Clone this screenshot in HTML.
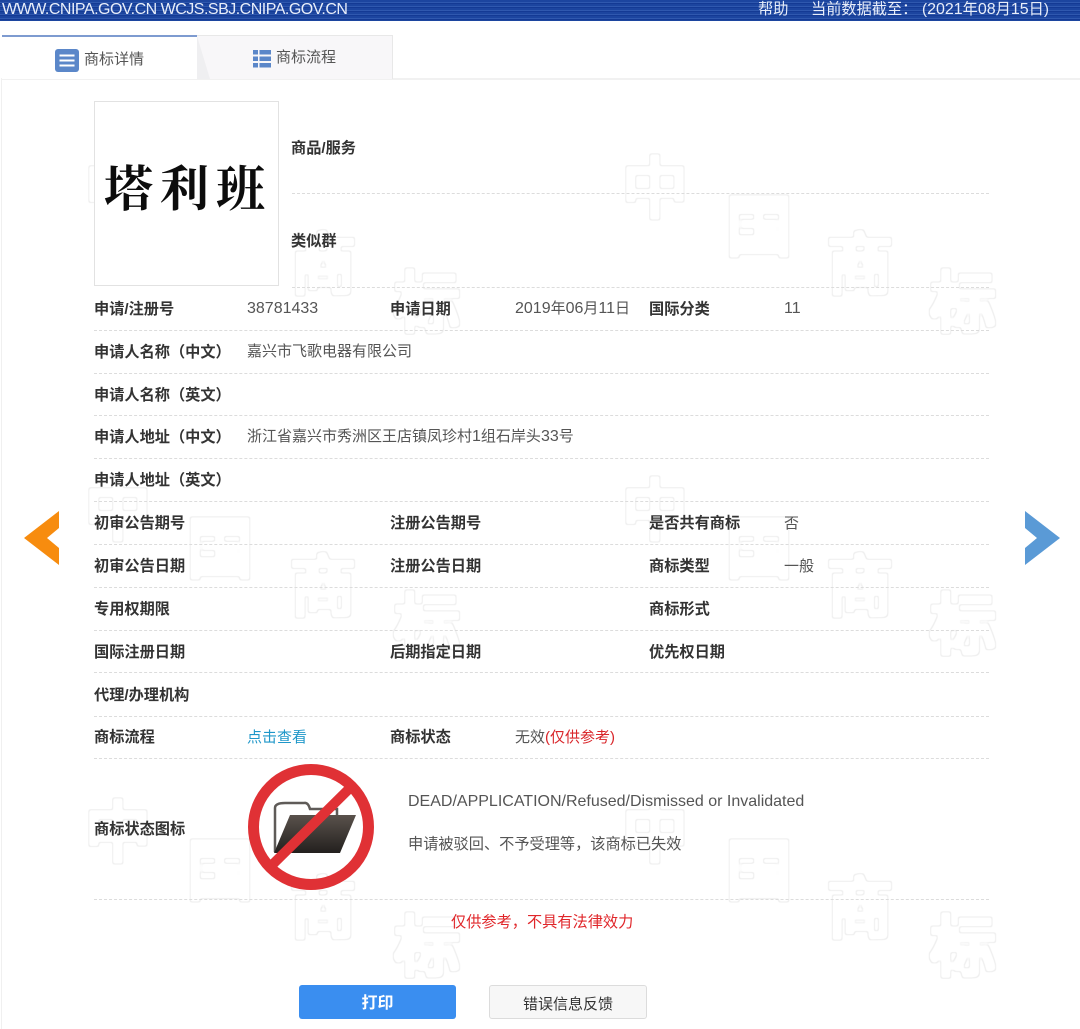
<!DOCTYPE html>
<html lang="zh"><head><meta charset="utf-8"><title>商标详情</title>
<style>
html,body{margin:0;padding:0;background:#fff}
#p{position:relative;width:1080px;height:1029px;overflow:hidden;background:#fff;font-family:"Liberation Sans","Noto Sans CJK SC",sans-serif;font-size:15px;color:#555;filter:blur(.35px)}
#p div{position:absolute;white-space:nowrap}
.l{font-weight:700;color:#333;height:22px;line-height:22px;font-size:15.2px}
.v{color:#555;height:22px;line-height:22px}
.v b{font-weight:400;font-size:16px}
.d{height:0;border-top:1px dashed #dcdcdc;left:94px;width:895px}
#wm{position:absolute;left:0;top:0}
#wm text{font-family:"Noto Sans CJK SC",sans-serif;font-size:66px;font-weight:400;fill:#000;text-anchor:middle}
</style></head><body><div id="p">
<svg id="wm" width="1080" height="1029">
<defs><filter id="o" filterUnits="userSpaceOnUse" x="0" y="0" width="1080" height="1029" color-interpolation-filters="sRGB">
<feMorphology in="SourceAlpha" operator="dilate" radius="3" result="a"/>
<feGaussianBlur in="a" stdDeviation="1" result="a2"/>
<feComponentTransfer in="a2" result="a3"><feFuncA type="linear" slope="3" intercept="-1"/></feComponentTransfer>
<feMorphology in="a3" operator="erode" radius="1.200" result="b"/>
<feFlood flood-color="#eeeeee"/>
<feComposite in2="a3" operator="in" result="c"/>
<feComposite in="c" in2="b" operator="out"/>
</filter></defs>
<g filter="url(#o)">
<text x="118" y="212">中</text><text x="220" y="250">国</text><text x="323" y="288">商</text><text x="427" y="326">标</text>
<text x="655" y="212">中</text><text x="759" y="250">国</text><text x="860" y="288">商</text><text x="963" y="326">标</text>
<text x="118" y="534">中</text><text x="220" y="572">国</text><text x="323" y="610">商</text><text x="427" y="648">标</text>
<text x="655" y="534">中</text><text x="759" y="572">国</text><text x="860" y="610">商</text><text x="963" y="648">标</text>
<text x="118" y="856">中</text><text x="220" y="894">国</text><text x="323" y="932">商</text><text x="427" y="970">标</text>
<text x="655" y="856">中</text><text x="759" y="894">国</text><text x="860" y="932">商</text><text x="963" y="970">标</text>
</g></svg>

<div style="left:0;top:0;width:1080px;height:21px;background:repeating-linear-gradient(180deg,#1c459f 0 2px,#2f58ae 2px 3px,#143a94 3px 4px)"></div>
<div style="left:2px;top:-1px;height:21px;line-height:21px;font-size:16px;color:#e8eefa;letter-spacing:-.5px">WWW.CNIPA.GOV.CN WCJS.SBJ.CNIPA.GOV.CN</div>
<div style="left:758px;top:-1px;height:21px;line-height:21px;font-size:15.200px;color:#e8eefa">帮助</div>
<div style="left:811px;top:-1px;height:21px;line-height:21px;font-size:15.200px;color:#e8eefa">当前数据截至：</div>
<div style="left:922px;top:-1px;height:21px;line-height:21px;font-size:15.200px;color:#e8eefa">(<span style="font-size:16px">2021</span>年<span style="font-size:16px">08</span>月<span style="font-size:16px">15</span>日)</div>

<div style="left:1px;top:78px;width:1079px;height:2px;background:#f1f1f1"></div>
<div style="left:1px;top:80px;width:1px;height:949px;background:#f0f0f0"></div>
<div style="left:197px;top:35px;width:195px;height:43px;background:#f8f7f9;border:1px solid #e8e8e8;border-left:0;border-bottom:0"></div>
<svg style="position:absolute;left:197px;top:36px" width="16" height="43"><polygon points="0,0 0,43 13,43" fill="#efeff1"/></svg>
<div style="left:2px;top:35px;width:195px;height:44px;background:#fff;border-top:2px solid #7e9bd0;box-sizing:border-box"></div>
<svg style="position:absolute;left:55px;top:49px" width="24" height="24"><rect width="24" height="23" rx="3" fill="#5b87c9"/><path d="M4.500 6.500H19.500M4.500 11.500H19.500M4.500 16.500H19.500" stroke="#fff" stroke-width="2"/></svg>
<div style="left:84px;top:49px;height:22px;line-height:22px;font-size:15px;color:#555">商标详情</div>
<svg style="position:absolute;left:253px;top:50px" width="18" height="18"><path d="M0 0H5V4.500H0ZM6.500 0H18V4.500H6.500ZM0 6.500H5V11H0ZM6.500 6.500H18V11H6.500ZM0 13H5V17.500H0ZM6.500 13H18V17.500H6.500Z" fill="#5b87c9"/></svg>
<div style="left:276px;top:47px;height:22px;line-height:22px;font-size:15px;color:#555">商标流程</div>

<div style="left:94px;top:101px;width:183px;height:183px;border:1px solid #e2e2e2;background:#fff"></div>
<div style="left:104px;top:153px;height:66px;line-height:66px;font-family:'Noto Serif CJK SC','Liberation Serif',serif;font-weight:700;font-size:49px;letter-spacing:7px;color:#0c0c0c">塔利班</div>

<div class="l" style="left:291px;top:138px">商品/服务</div>
<div class="l" style="left:291px;top:231px">类似群</div>
<div class="d" style="left:292px;width:697px;top:193px"></div>
<div class="d" style="left:292px;width:697px;top:287px"></div>

<div class="l" style="left:94px;top:299px">申请/注册号</div><div class="v" style="left:247px;top:298px"><b>38781433</b></div>
<div class="l" style="left:390px;top:299px">申请日期</div><div class="v" style="left:515px;top:298px"><b>2019</b>年<b>06</b>月<b>11</b>日</div>
<div class="l" style="left:649px;top:299px">国际分类</div><div class="v" style="left:784px;top:298px"><b>11</b></div>
<div class="d" style="top:330px"></div>
<div class="l" style="left:94px;top:342px">申请人名称（中文）</div><div class="v" style="left:247px;top:341px">嘉兴市飞歌电器有限公司</div>
<div class="d" style="top:373px"></div>
<div class="l" style="left:94px;top:385px">申请人名称（英文）</div>
<div class="d" style="top:415px"></div>
<div class="l" style="left:94px;top:427px">申请人地址（中文）</div><div class="v" style="left:247px;top:426px">浙江省嘉兴市秀洲区王店镇凤珍村<b>1</b>组石岸头<b>33</b>号</div>
<div class="d" style="top:458px"></div>
<div class="l" style="left:94px;top:470px">申请人地址（英文）</div>
<div class="d" style="top:501px"></div>
<div class="l" style="left:94px;top:513px">初审公告期号</div><div class="l" style="left:390px;top:513px">注册公告期号</div><div class="l" style="left:649px;top:513px">是否共有商标</div><div class="v" style="left:784px;top:513px">否</div>
<div class="d" style="top:544px"></div>
<div class="l" style="left:94px;top:556px">初审公告日期</div><div class="l" style="left:390px;top:556px">注册公告日期</div><div class="l" style="left:649px;top:556px">商标类型</div><div class="v" style="left:784px;top:556px">一般</div>
<div class="d" style="top:587px"></div>
<div class="l" style="left:94px;top:599px">专用权期限</div><div class="l" style="left:649px;top:599px">商标形式</div>
<div class="d" style="top:630px"></div>
<div class="l" style="left:94px;top:642px">国际注册日期</div><div class="l" style="left:390px;top:642px">后期指定日期</div><div class="l" style="left:649px;top:642px">优先权日期</div>
<div class="d" style="top:672px"></div>
<div class="l" style="left:94px;top:685px">代理/办理机构</div>
<div class="d" style="top:716px"></div>
<div class="l" style="left:94px;top:727px">商标流程</div><div class="v" style="left:247px;top:727px;color:#1f97c9">点击查看</div>
<div class="l" style="left:390px;top:727px">商标状态</div><div class="v" style="left:515px;top:727px">无效<span style="color:#d9262a">(仅供参考)</span></div>
<div class="d" style="top:758px"></div>

<div class="l" style="left:94px;top:819px">商标状态图标</div>
<svg style="position:absolute;left:245px;top:761px" width="132" height="132" viewBox="0 0 132 132">
<defs><linearGradient id="g" x1="0" y1="0" x2="0" y2="1"><stop offset="0" stop-color="#5a524c"/><stop offset="1" stop-color="#23201e"/></linearGradient></defs>
<path d="M30 91V47Q30 42 40 42H59Q63 41 65 48H92V54" fill="none" stroke="#5f5b58" stroke-width="2.500"/>
<path d="M29 92H95L111 54H45Z" fill="url(#g)"/>
<circle cx="66" cy="66" r="57.500" fill="none" stroke="#e03135" stroke-width="11"/>
<path d="M27 104L108 24" stroke="#e03135" stroke-width="10"/>
</svg>
<div class="v" style="left:408px;top:791px;font-size:16px">DEAD/APPLICATION/Refused/Dismissed or Invalidated</div>
<div class="v" style="left:408px;top:834px;font-size:15.200px">申请被驳回、不予受理等，该商标已失效</div>
<div class="d" style="top:899px"></div>
<div class="v" style="left:451px;top:912px;color:#e0262a;font-size:15.200px">仅供参考，不具有法律效力</div>

<div style="left:299px;top:985px;width:157px;height:34px;background:#3a8ef0;border-radius:3px;color:#fff;font-weight:700;font-size:16px;line-height:38px;text-align:center">打印</div>
<div style="left:489px;top:985px;width:156px;height:32px;background:#f7f7f7;border:1px solid #dcdcdc;border-radius:3px;color:#333;font-size:15px;line-height:37px;text-align:center">错误信息反馈</div>

<svg style="position:absolute;left:24px;top:511px" width="36" height="54"><polygon points="0,27 35,0 35,17 23,27 35,37 35,54" fill="#f78c0f"/></svg>
<svg style="position:absolute;left:1025px;top:511px" width="36" height="54"><polygon points="35,27 0,0 0,17 12,27 0,37 0,54" fill="#5a9ad6"/></svg>
</div></body></html>
